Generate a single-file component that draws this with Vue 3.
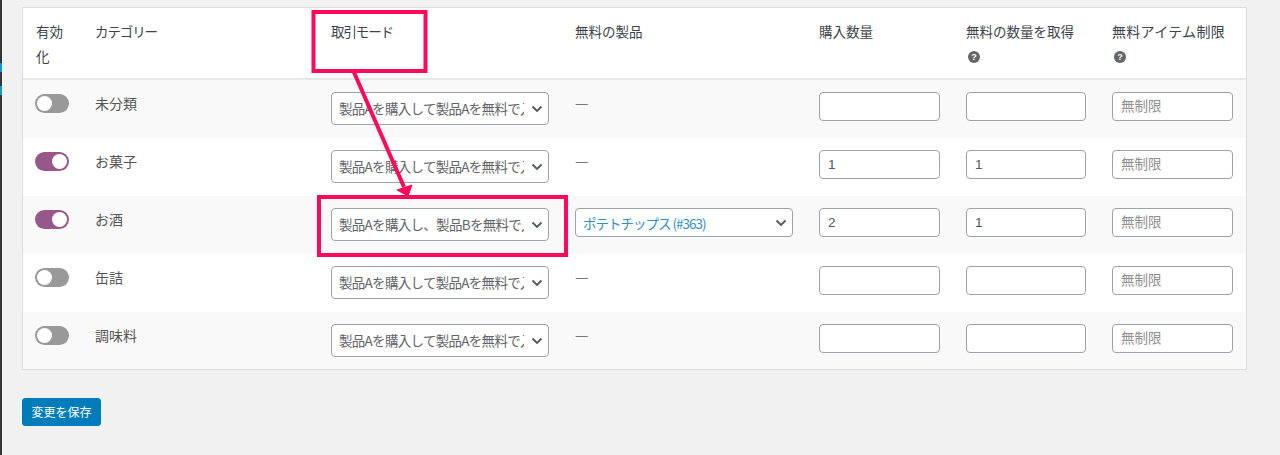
<template>
  <div class="page">
    <!-- 左端に少しだけ見えている管理メニュー -->
    <div class="admin-edge">
      <i class="dark top"></i>
      <i class="blue"></i>
      <i class="dark gap"></i>
      <i class="blue"></i>
      <i class="dark rest"></i>
    </div>

    <div class="content">
      <table class="deal-table">
        <colgroup>
          <col class="c-toggle" />
          <col class="c-cat" />
          <col class="c-mode" />
          <col class="c-product" />
          <col class="c-buy" />
          <col class="c-get" />
          <col class="c-limit" />
        </colgroup>
        <thead>
          <tr>
            <th>有効化</th>
            <th class="tight">カテゴリー</th>
            <th class="tight">取引モード</th>
            <th>無料の製品</th>
            <th>購入数量</th>
            <th>無料の数量を取得<span class="help">?</span></th>
            <th class="wide">無料アイテム制限<span class="help">?</span></th>
          </tr>
        </thead>
        <tbody>
          <tr v-for="row in rows" :key="row.name">
            <td><span class="toggle" :class="{ on: row.on }"></span></td>
            <td class="name">{{ row.name }}</td>
            <td>
              <div class="select-wrap">
                <select class="mode-select">
                  <option>{{ row.mode }}</option>
                </select>
                <svg class="chev" viewBox="0 0 12 8"><path d="M1.5 1.5 6 6l4.5-4.5" /></svg>
              </div>
            </td>
            <td>
              <div v-if="row.product" class="select-wrap">
                <div class="product-select">{{ row.product }}</div>
                <svg class="chev" viewBox="0 0 12 8"><path d="M1.5 1.5 6 6l4.5-4.5" /></svg>
              </div>
              <span v-else class="dash">—</span>
            </td>
            <td><input class="num" type="text" :value="row.buy" /></td>
            <td><input class="num" type="text" :value="row.get" /></td>
            <td><input class="num" type="text" placeholder="無制限" /></td>
          </tr>
        </tbody>
      </table>

      <button class="save">変更を保存</button>
    </div>

    <!-- スクリーンショットに書き込まれた赤い注釈 -->
    <svg class="notes" viewBox="0 0 1280 455">
      <rect x="313.5" y="12" width="112" height="59" />
      <rect x="319" y="197" width="247" height="58" />
      <path class="line" d="M353 70 404 187" />
      <path class="head" d="M397 190 412 185 408 196Z" />
    </svg>
  </div>
</template>

<script setup>
const modeA = '製品Aを購入して製品Aを無料で入手'
const modeB = '製品Aを購入し、製品Bを無料で入手'

const rows = [
  { name: '未分類', on: false, mode: modeA, product: '', buy: '', get: '' },
  { name: 'お菓子', on: true, mode: modeA, product: '', buy: '1', get: '1' },
  { name: 'お酒', on: true, mode: modeB, product: 'ポテトチップス (#363)', buy: '2', get: '1' },
  { name: '缶詰', on: false, mode: modeA, product: '', buy: '', get: '' },
  { name: '調味料', on: false, mode: modeA, product: '', buy: '', get: '' },
]
</script>

<style>
body { background: #f1f1f1; }
</style>

<style scoped>
.page {
  position: relative;
  display: flex;
  height: 455px;
  overflow: hidden;
  font-family: "Noto Sans CJK JP", "Liberation Sans", sans-serif;
  font-size: 14px;
  color: #444;
}

.admin-edge { display: flex; flex-direction: column; width: 2px; }
.admin-edge i { display: block; }
.admin-edge .dark { background: #32373c; }
.admin-edge .top { height: 63px; }
.admin-edge .blue { height: 9px; background: #0a9ad6; }
.admin-edge .gap { height: 14px; }
.admin-edge .rest { flex: 1; }

.content { padding: 7px 0 0 20px; }

.deal-table {
  width: 1225px;
  table-layout: fixed;
  border-collapse: separate;
  border-spacing: 0;
  background: #fff;
  border: 1px solid #dcdcde;
}
.c-toggle { width: 59px; }
.c-cat { width: 236px; }
.c-mode { width: 244px; }
.c-product { width: 244px; }
.c-buy { width: 147px; }
.c-get { width: 146px; }
.c-limit { width: 147px; }

th {
  height: 72px;
  padding: 11px 13px 0;
  box-sizing: border-box;
  border-bottom: 2px solid #e6e8ea;
  vertical-align: top;
  text-align: left;
  font-size: 13.5px;
  font-weight: 400;
  line-height: 25px;
  color: #3c434a;
}
th.tight { letter-spacing: -1.1px; }
th.wide { font-size: 14px; letter-spacing: 0.3px; }
.help {
  display: block;
  width: 12px;
  height: 12px;
  margin: 7px 0 0 2px;
  border-radius: 50%;
  background: #666;
  color: #fff;
  font: 700 9px/12px "Liberation Sans", sans-serif;
  letter-spacing: 0;
  text-align: center;
}

td {
  height: 58px;
  padding: 12px 13px 0;
  box-sizing: border-box;
  vertical-align: top;
  line-height: 24px;
  color: #50575e;
}
tbody tr:last-child td { height: 57px; }
tbody tr:nth-child(odd) { background: #f9f9f9; }
td.name { padding-top: 0; line-height: 47px; color: #555; }

.toggle {
  position: relative;
  display: block;
  width: 34px;
  height: 19px;
  margin: 2px 0 0 -1px;
  box-sizing: border-box;
  border-radius: 10px;
  background: #999;
}
.toggle::after {
  content: "";
  position: absolute;
  left: 2px;
  top: 2px;
  width: 15px;
  height: 15px;
  border-radius: 50%;
  background: #fff;
}
.toggle.on { background: #96588a; }
.toggle.on::after { left: 17px; }

.select-wrap { position: relative; }
.mode-select,
.product-select {
  display: block;
  width: 218px;
  box-sizing: border-box;
  border: 1px solid #9ea3a8;
  border-radius: 4px;
  background: #fff;
  color: #5f6468;
  font: inherit;
}
.mode-select {
  height: 33px;
  padding: 0 24px 2px 7px;
  font-size: 13.5px;
  letter-spacing: -0.7px;
  appearance: none;
  -webkit-appearance: none;
}
.product-select {
  height: 29px;
  padding: 0 7px;
  font-size: 13.5px;
  line-height: 28px;
  letter-spacing: -1px;
  color: #2e8fc0;
}
.chev {
  position: absolute;
  right: 6px;
  top: 13px;
  width: 12px;
  height: 8px;
  fill: none;
  stroke: #50575e;
  stroke-width: 1.8;
}
.product-select + .chev { top: 11px; }

.dash { display: block; color: #777; line-height: 22px; font-size: 15px; }

.num {
  display: block;
  width: 100%;
  height: 29px;
  padding: 0 8px;
  box-sizing: border-box;
  border: 1px solid #9ea3a8;
  border-radius: 4px;
  background: #fff;
  color: #50575e;
  font: 13.5px "Liberation Sans", "Noto Sans CJK JP", sans-serif;
}
.num::placeholder { color: #8f8f8f; opacity: 1; }

.save {
  display: block;
  width: 79px;
  height: 28px;
  margin-top: 28px;
  padding: 0;
  border: 1px solid #007cba;
  border-radius: 3px;
  background: #007cba;
  color: #fff;
  font: 12px/26px "Noto Sans CJK JP", sans-serif;
}

.notes {
  position: absolute;
  inset: 0;
  width: 1280px;
  height: 455px;
  pointer-events: none;
}
.notes rect {
  fill: none;
  stroke: #ff0a5a;
  stroke-width: 4;
}
.notes .line {
  fill: none;
  stroke: #ff0a5a;
  stroke-width: 4;
}
.notes .head { fill: #ff0a5a; stroke: #ff0a5a; stroke-width: 1; }
</style>
